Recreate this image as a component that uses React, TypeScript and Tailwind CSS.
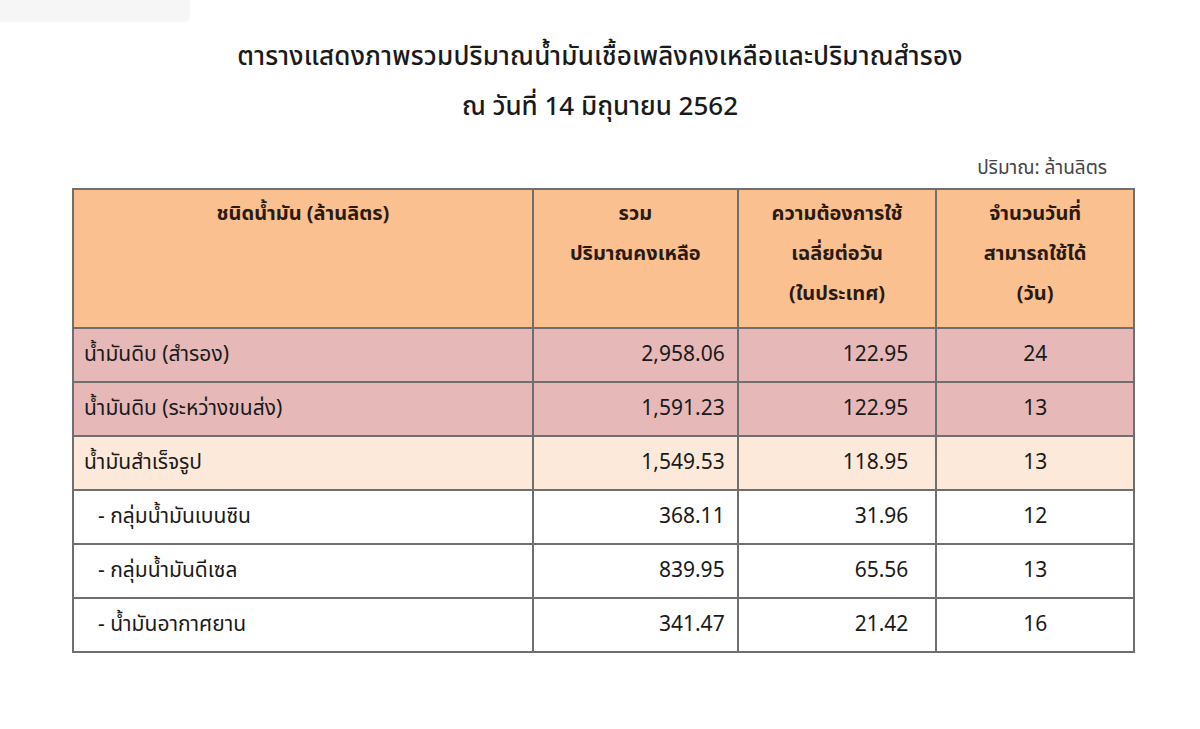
const rows = [
  { name: "น้ำมันดิบ (สำรอง)", total: "2,958.06", daily: "122.95", days: "24", bg: "bg-[#e6b9b8]", sub: false },
  { name: "น้ำมันดิบ (ระหว่างขนส่ง)", total: "1,591.23", daily: "122.95", days: "13", bg: "bg-[#e6b9b8]", sub: false },
  { name: "น้ำมันสำเร็จรูป", total: "1,549.53", daily: "118.95", days: "13", bg: "bg-[#fde9d9]", sub: false },
  { name: "- กลุ่มน้ำมันเบนซิน", total: "368.11", daily: "31.96", days: "12", bg: "bg-white", sub: true },
  { name: "- กลุ่มน้ำมันดีเซล", total: "839.95", daily: "65.56", days: "13", bg: "bg-white", sub: true },
  { name: "- น้ำมันอากาศยาน", total: "341.47", daily: "21.42", days: "16", bg: "bg-white", sub: true },
];

export default function App() {
  return (
    <div className="relative w-[1200px] h-[729px] bg-white text-[#1a1a1a] font-['Tahoma','Noto_Sans_Thai','Noto_Sans',sans-serif]">
      {/* faint box top-left */}
      <div className="absolute left-0 top-0 w-[190px] h-[22px] bg-[#f6f6f6] rounded-br-md" />

      <div className="flex flex-col items-center pt-[38px]">
        <h1 className="text-[26px] leading-[38px] font-medium tracking-[0.2px]">
          ตารางแสดงภาพรวมปริมาณน้ำมันเชื้อเพลิงคงเหลือและปริมาณสำรอง
        </h1>
        <h2 className="mt-[12px] text-[26px] leading-[38px] font-medium">ณ วันที่ 14 มิถุนายน 2562</h2>
      </div>

      <div className="w-[1063px] ml-[72px] mt-[30px]">
        <div className="text-right pr-[28px] text-[19px] leading-[26px] text-[#444]">ปริมาณ: ล้านลิตร</div>

        <table className="mt-[6px] w-full border-collapse border-2 border-[#6f6f6f] text-[20px]">
          <colgroup>
            <col className="w-[461px]" />
            <col className="w-[205px]" />
            <col className="w-[199px]" />
            <col className="w-[198px]" />
          </colgroup>
          <thead>
            <tr className="h-[139px] bg-[#fac090] align-top font-bold text-[#2a1a10]">
              <th className="border-2 border-[#6f6f6f] pt-[4px] font-bold leading-[40px]">ชนิดน้ำมัน (ล้านลิตร)</th>
              <th className="border-2 border-[#6f6f6f] pt-[4px] font-bold leading-[40px]">
                รวม<br />ปริมาณคงเหลือ
              </th>
              <th className="border-2 border-[#6f6f6f] pt-[4px] font-bold leading-[40px]">
                ความต้องการใช้<br />เฉลี่ยต่อวัน<br />(ในประเทศ)
              </th>
              <th className="border-2 border-[#6f6f6f] pt-[4px] font-bold leading-[40px]">
                จำนวนวันที่<br />สามารถใช้ได้<br />(วัน)
              </th>
            </tr>
          </thead>
          <tbody className="text-[21px]">
            {rows.map((r) => (
              <tr key={r.name} className={`h-[54px] ${r.bg}`}>
                <td className={`border-2 border-[#6f6f6f] ${r.sub ? "pl-[24px]" : "pl-[10px]"}`}>{r.name}</td>
                <td className="border-2 border-[#6f6f6f] text-right pr-[12px]">{r.total}</td>
                <td className="border-2 border-[#6f6f6f] text-right pr-[27px]">{r.daily}</td>
                <td className="border-2 border-[#6f6f6f] text-center">{r.days}</td>
              </tr>
            ))}
          </tbody>
        </table>
      </div>
    </div>
  );
}
